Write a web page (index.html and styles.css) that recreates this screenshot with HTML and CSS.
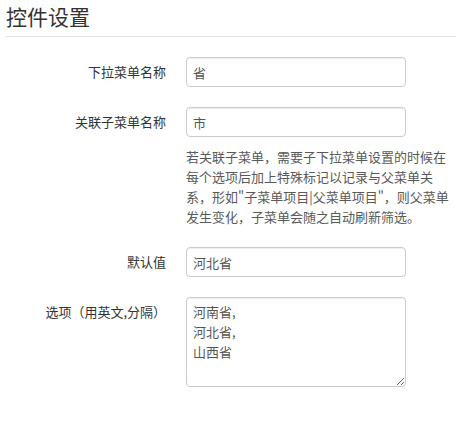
FILE: index.html
```html
<!DOCTYPE html>
<html lang="zh-CN">

<head>
    <meta charset="UTF-8">
    <title>控件设置</title>
    <link rel="stylesheet" href="styles.css">
</head>

<body>
    <form class="form-horizontal">
        <fieldset>
            <legend>控件设置</legend>
            <div class="control-group">
                <label class="control-label">下拉菜单名称</label>
                <div class="controls">
                    <input type="text" value="省">
                </div>
            </div>
            <div class="control-group">
                <label class="control-label">关联子菜单名称</label>
                <div class="controls">
                    <input type="text" value="市">
                    <p class="help-block">若关联子菜单，需要子下拉菜单设置的时候在每个选项后加上特殊标记以记录与父菜单关系，形如"子菜单项目|父菜单项目"，则父菜单发生变化，子菜单会随之自动刷新筛选。</p>
                </div>
            </div>
            <div class="control-group">
                <label class="control-label">默认值</label>
                <div class="controls">
                    <input type="text" value="河北省">
                </div>
            </div>
            <div class="control-group">
                <label class="control-label">选项（用英文,分隔）</label>
                <div class="controls">
                    <textarea rows="4">河南省,
河北省,
山西省</textarea>
                </div>
            </div>
        </fieldset>
    </form>
</body>

</html>
```

FILE: styles.css
```css
body {
    margin: 0;
    padding: 0 14px 0 6px;
    font-family: "Noto Sans CJK SC", "Liberation Sans", sans-serif;
    font-size: 13px;
    line-height: 20px;
    color: #333;
    background-color: #fff;
}

.form-horizontal {
    width: 450px;
}

fieldset {
    margin: 0;
    padding: 0;
    border: 0;
}

legend {
    display: block;
    width: 100%;
    padding: 0 0 4px 0;
    margin-bottom: 20px;
    font-size: 21px;
    line-height: 32px;
    color: #333;
    border-bottom: 1px solid #e5e5e5;
}

.control-group {
    display: flex;
    align-items: flex-start;
    margin-bottom: 20px;
}

.control-label {
    width: 160px;
    flex: none;
    padding-top: 5px;
    text-align: right;
}

.controls {
    flex: 1;
    margin-left: 20px;
}

input,
textarea {
    display: block;
    box-sizing: border-box;
    width: 220px;
    margin: 0;
    padding: 4px 6px;
    font-family: inherit;
    font-size: 13px;
    line-height: 20px;
    color: #555;
    background-color: #fff;
    border: 1px solid #ccc;
    border-radius: 4px;
    box-shadow: inset 0 1px 1px rgba(0, 0, 0, 0.075);
    outline: none;
}

input {
    height: 30px;
}

textarea {
    height: 90px;
    resize: vertical;
}

.help-block {
    margin: 10px 0 0 0;
    color: #595959;
}
```
